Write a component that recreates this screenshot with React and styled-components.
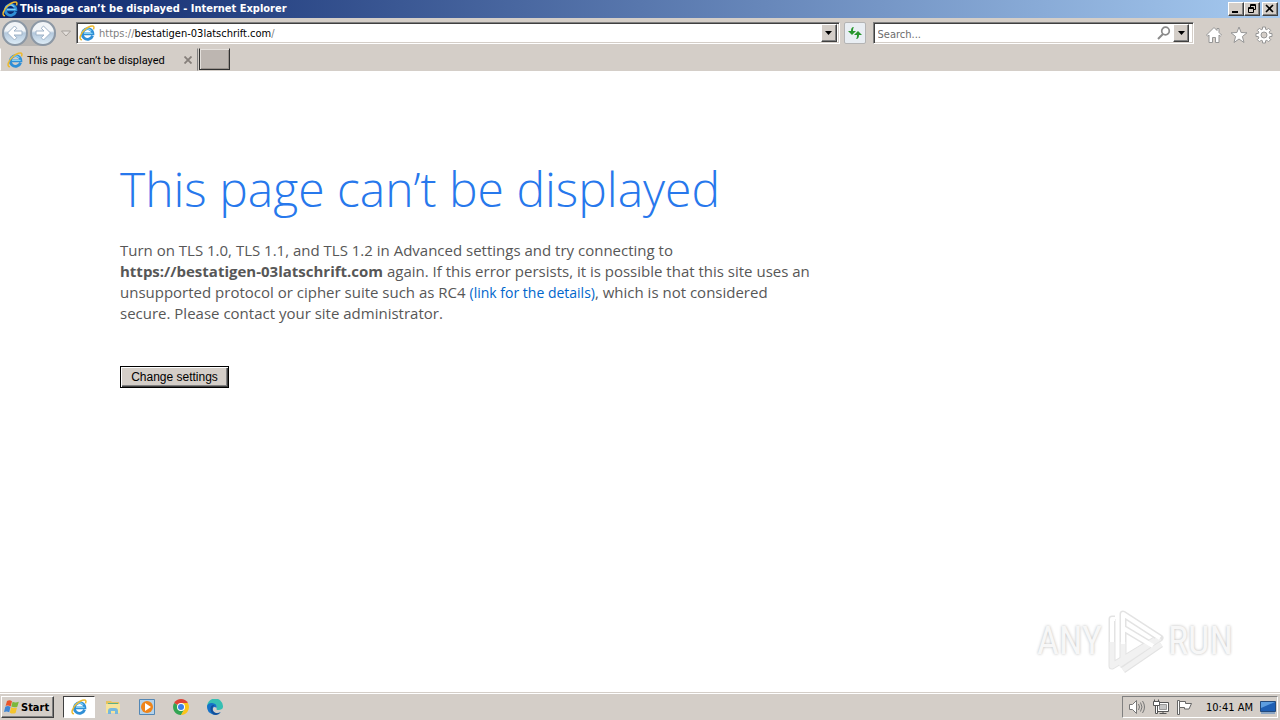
import styled, { createGlobalStyle, css } from 'styled-components';

const GlobalStyle = createGlobalStyle`
  * {
    box-sizing: border-box;
  }

  body {
    margin: 0;
    background: #fff;
    font-family: "DejaVu Sans Condensed", "Noto Sans", sans-serif;
    font-size: 11px;
    color: #000;
  }

  button, input {
    font: inherit;
    color: inherit;
    margin: 0;
    padding: 0;
  }

  svg {
    display: block;
    flex: none;
  }
`

const raised = css`
  border: 1px solid;
  border-color: #fff #404040 #404040 #fff;
  box-shadow: inset -1px -1px 0 #808080;
  background: #d4cec8;
`

const Window = styled.div`
  display: flex;
  flex-direction: column;
  min-height: 100vh;
`

const TitleBar = styled.header`
  display: flex;
  align-items: center;
  gap: 2px;
  height: 18px;
  padding: 0 2px;
  background: linear-gradient(90deg, #0a246a, #a6caf0);
  color: #fff;

  h1 {
    flex: 1;
    margin: 0;
    font-family: "DejaVu Sans Condensed", sans-serif;
    font-size: 11px;
    line-height: 16px;
    font-weight: 700;
  }
`

const WindowButtons = styled.div`
  display: flex;

  button:last-child {
    margin-left: 2px;
  }
`

const WindowButton = styled.button`
  ${raised}
  display: grid;
  place-items: center;
  width: 16px;
  height: 14px;
`

const NavBar = styled.div`
  display: flex;
  align-items: center;
  height: 30px;
  padding: 0 4px 0 2px;
  background: #d4cec8;
`

const HistoryButtons = styled.div`
  display: flex;
  gap: 2px;
  border-radius: 14px;
  background: #b9b6b3;
`

const RoundButton = styled.button`
  display: grid;
  place-items: center;
  width: 26px;
  height: 26px;
  border: 2px solid #8c98a5;
  border-radius: 50%;
  background: linear-gradient(#f1f4f7 40%, #b3c8dc 50%, #dcebf6);
`

const PlainButton = styled.button`
  display: grid;
  place-items: center;
  width: ${({ $width }) => $width || 24}px;
  height: 22px;
  border: 0;
  background: none;
`

const Field = styled.form`
  display: flex;
  align-items: center;
  flex: ${({ $grow }) => $grow} 1 0;
  height: 22px;
  padding: 0 ${({ $end }) => $end || 2}px 0 2px;
  border: 1px solid;
  border-color: #808080 #fff #fff #808080;
  box-shadow: inset 1px 1px 0 #404040, inset -1px -1px 0 #d4cec8;
  background: #fff;
`

const Address = styled.label`
  position: relative;
  display: flex;
  align-items: center;
  flex: 1;
  height: 18px;

  input {
    flex: 1;
    min-width: 0;
    border: 0;
    outline: 0;
    background: none;
    color: transparent;
  }
`

// sits over the input so that the host can be darker than the scheme
const AddressText = styled.span`
  position: absolute;
  left: 20px;
  line-height: 20px;
  top: 0;
  color: #808080;
  pointer-events: none;

  b {
    font-weight: 400;
    color: #000;
  }
`

const SearchInput = styled.input`
  flex: 1;
  min-width: 0;
  border: 0;
  outline: 0;
  background: none;

  &::placeholder {
    color: #6d6d6d;
    opacity: 1;
  }

  && {
    padding: 2px 0 0 2px;
  }
`

const DropButton = styled.button`
  ${raised}
  display: grid;
  place-items: center;
  width: 16px;
  height: 18px;
`

const RefreshButton = styled.button`
  display: grid;
  place-items: center;
  width: 22px;
  height: 22px;
  border: 1px solid #b4b4b4;
  border-radius: 2px;
  background: #e9eef3;

  && {
    margin: 0 7px 0 4px;
  }
`

const Tools = styled.div`
  display: flex;
  margin: 3px 0 0 8px;
  gap: 1px;
`

const TabBar = styled.div`
  display: flex;
  gap: 1px;
  height: 23px;
  background: #d4cec8;
`

const Tab = styled.div`
  display: flex;
  align-items: center;
  gap: 4px;
  width: 198px;
  padding: 1px 0 0 6px;
  border: 1px solid;
  border-color: #d4cec8 #808080 #d4cec8 #fff;
  font-family: Roboto, "Liberation Sans", sans-serif;

  span {
    flex: 1;
  }
`

const NewTab = styled.button`
  width: 31px;
  height: 22px;
  border: 1px solid;
  border-color: #d4cec8 #303030 #303030 #303030;
  background: #bdb6b1;
  box-shadow: inset 1px 1px 0 #e4e0dc, inset -1px -1px 0 #98918c;
`

const Page = styled.main`
  display: flex;
  flex-direction: column;
  flex: 1;
  padding: 84px 120px 0;
  font-family: "Open Sans", "Noto Sans", sans-serif;
  font-size: 15px;
  line-height: 21px;
  color: #575757;

  h2 {
    margin: 0;
    font-size: 48px;
    line-height: 68px;
    font-weight: 300;
    color: #2778ec;
  }

  p {
    max-width: 700px;
    margin: 17px 0 42px;
  }

  b {
    white-space: nowrap;
  }

  a {
    color: #0066cc;
    font-size: 14px;
    text-decoration: none;
  }
`

const SettingsButton = styled.button`
  align-self: flex-start;
  width: 109px;
  height: 22px;
  border: 1px solid #000;
  box-shadow: inset 1px 1px 0 #fff, inset -1px -1px 0 #404040, inset -2px -2px 0 #808080;
  background: #d4cec8;
  color: #000;
  font-family: "Liberation Sans", sans-serif;
  font-size: 12px;
  line-height: 16px;
`

const Watermark = styled.div`
  position: absolute;
  right: 47px;
  bottom: 46px;
  display: flex;
  align-items: center;
  gap: 3px;
  font-family: "Roboto Condensed", "Liberation Sans Narrow", sans-serif;
  font-size: 38px;
  line-height: 64px;
  color: #f7f7f7;
  text-shadow: 0 0 3px #b8b8b8;
`

const TaskBar = styled.footer`
  display: flex;
  align-items: center;
  height: 28px;
  padding: 1px 2px 0 1px;
  border-top: 1px solid #d4cec8;
  box-shadow: inset 0 1px 0 #fff;
  background: #d4cec8;
`

const StartButton = styled.button`
  ${raised}
  display: flex;
  align-items: center;
  gap: 1px;
  width: 53px;
  height: 22px;
  font-weight: 700;

  && {
    padding-left: 2px;
    margin-right: 9px;
  }
`

const TaskButton = styled.button`
  display: grid;
  place-items: center;
  width: 32px;
  height: 22px;
  border: 1px solid;
  border-color: ${({ $active }) => ($active ? '#404040 #fff #fff #404040' : 'transparent')};
  background: ${({ $active }) => ($active ? '#fff' : 'none')};

  && {
    margin-right: 2px;
  }
`

const Tray = styled.div`
  display: flex;
  align-items: center;
  gap: 7px;
  height: 22px;
  margin-left: auto;
  padding: 0 1px 0 5px;
  border: 1px solid;
  border-color: #808080 #fff #fff #808080;

  time {
    margin-left: 6px;
  }
`

const IeIcon = ({ size = 16 }) => (
  <svg width={size} height={size} viewBox="0 0 16 16" fill="none">
    <path d="M13.600 10.800A5.300 5.300 0 1 1 13.900 8.800H4.500" stroke="#2f8fd6" strokeWidth="2.800" />
    <path d="M13.600 8.400H5M3.200 7.700A5.200 5.200 0 0 1 12.300 6" stroke="#7fd0f5" strokeWidth="1.200" />
    <path d="M3 14.800C-.8 14.600 1.500 8.500 6 4.500c3.500-3 8-4.600 8.800-2.700.3.800 0 1.700-.4 2.600" stroke="#edb92e" strokeWidth="1.500" />
  </svg>
)

const ArrowIcon = ({ forward }) => (
  <svg width="18" height="18" viewBox="0 0 18 18">
    <path
      d={forward
        ? 'M9.500 2l7 7-7 7-2.300-2.300L10 11H2V7h8L7.200 4.300z'
        : 'M8.500 2l-7 7 7 7 2.300-2.300L8 11h8V7H8l2.800-2.700z'}
      fill="#fff"
      stroke="#9fb3c8"
    />
  </svg>
)

const DropIcon = () => (
  <svg width="7" height="4" viewBox="0 0 7 4"><path d="M0 0h7L3.500 4z" /></svg>
)

const HistoryIcon = () => (
  <svg width="10" height="7" viewBox="0 0 10 7"><path d="M.5 1h9L5 6z" fill="#e4e0dc" stroke="#a5a09b" /></svg>
)

const RefreshIcon = () => (
  <svg width="16" height="16" viewBox="0 0 16 16" fill="#28962d">
    <path d="M7 2C4.500 2 4 4 4 6H1l4 4 4-4H6c0-2 .2-3 1-4z" />
    <path d="M9 14c2.500 0 3-2 3-4h3l-4-4-4 4h3c0 2-.2 3-1 4z" />
  </svg>
)

const SearchIcon = () => (
  <svg width="14" height="14" viewBox="0 0 14 14" fill="none" stroke="#8a8a8a">
    <circle cx="8.500" cy="5" r="3.800" strokeWidth="1.700" />
    <path d="M6 8l-5 5" strokeWidth="2" />
  </svg>
)

const HomeIcon = () => (
  <svg width="18" height="18" viewBox="0 0 18 18" fill="#fff" stroke="#969696">
    <path d="M9 1.500L1.500 9l1.200 1.200L4 9v7.500h3.500v-5h3v5H14V9l1.300 1.200L16.500 9 14 6.500v-4h-2v2z" />
  </svg>
)

const StarIcon = () => (
  <svg width="18" height="18" viewBox="0 0 18 18" fill="#fff" stroke="#969696">
    <path d="M9 1l2.100 5.500 5.900.3-4.600 3.700L14 16.500 9 13l-5 3.500 1.600-6L1 6.800l5.900-.3z" />
  </svg>
)

const GearIcon = () => (
  <svg width="18" height="18" viewBox="0 0 18 18" fill="#fff" stroke="#969696">
    <path d="M7.500 1h3v2.200l1.400.6 1.600-1.600 2.200 2.200-1.600 1.600.6 1.500H17v3h-2.300l-.6 1.500 1.600 1.600-2.200 2.200-1.600-1.600-1.400.6V17h-3v-2.200l-1.400-.6-1.600 1.600-2.200-2.200L3.900 12l-.6-1.500H1v-3h2.300L3.900 6 2.300 4.400l2.200-2.200 1.600 1.600 1.400-.6z" />
    <circle cx="9" cy="9" r="3" fill="#d4cec8" />
  </svg>
)

const WindowsIcon = () => (
  <svg width="16" height="16" viewBox="0 0 16 16">
    <path d="M3 2c2-1 3.500-.8 5 .2L6.700 7.400C5 6.400 3.500 6.400 1.600 7z" fill="#e9552b" />
    <path d="M8.600 2.700c2 1 3.800 1 6.200 0l-1.500 5c-2 1-4 .8-6-.1z" fill="#7bb83b" />
    <path d="M1.300 7.700c2-.8 3.500-.8 5.200.2L5.200 13.300C3.500 12.300 2 12.200 0 13z" fill="#3f86d5" />
    <path d="M7.100 8.300c2 1 3.900 1 5.900.2L11.600 14c-2 .9-3.800.8-5.800-.3z" fill="#f5c52e" />
  </svg>
)

const FolderIcon = () => (
  <svg width="16" height="16" viewBox="0 0 16 16">
    <path d="M1 2h5l1 1h7v10H1z" fill="#e6c35e" />
    <path d="M3 4h10v3H3z" fill="#5caf86" />
    <path d="M1 5h14v9H1z" fill="#f6e39b" />
    <path d="M3 15v-3a3 3 0 0 1 3-3h4a3 3 0 0 1 3 3v3h-3v-3H6v3z" fill="#76b8dd" />
  </svg>
)

const PlayerIcon = () => (
  <svg width="16" height="16" viewBox="0 0 16 16">
    <path d="M.5.500h15v15H.500z" fill="#b4d2ea" stroke="#5387b5" />
    <circle cx="8" cy="8" r="6" fill="#ef8419" />
    <path d="M6 4l6 4-6 4z" fill="#fff" />
  </svg>
)

const ChromeIcon = () => (
  <svg width="16" height="16" viewBox="0 0 16 16">
    <path d="M8 8L1.100 4A8 8 0 0 1 14.900 4z" fill="#df4335" />
    <path d="M8 8L1.100 4A8 8 0 0 0 8 16l3.500-6z" fill="#33a553" />
    <path d="M8 8l3.500 2L8 16A8 8 0 0 0 14.900 4H8z" fill="#fbc419" />
    <circle cx="8" cy="8" r="4" fill="#fff" />
    <circle cx="8" cy="8" r="3" fill="#3c7fe8" />
  </svg>
)

const EdgeIcon = () => (
  <svg width="16" height="16" viewBox="0 0 16 16">
    <path d="M0 8a8 8 0 0 1 16-1c.3 3-2 4-4.500 4-2 0-2.500-1-1.700-2 .8-1.700-.5-3-2.500-3C4 6 1 8 0 8z" fill="#36bfb3" />
    <path d="M0 8c0-3 3-4.500 6-3.800 3 .5 4.500 3 3.500 4.800C7 6.800 5 9 6 11.500c1 2.800 4.700 3.300 8 1.500A8 8 0 0 1 0 8z" fill="#1572c8" />
    <path d="M3.500 9.500c0-2.500 2-4 4-3.500C5.500 7.500 5 10 6 12c1 2 4 3 7.500 1.500A7 7 0 0 1 9 16c-3.500 0-5.500-3-5.500-6.500z" fill="#134f9a" />
  </svg>
)

const SpeakerIcon = () => (
  <svg width="18" height="16" viewBox="0 0 18 16" fill="none" stroke="#777">
    <path d="M1.500 5.500h3l4-4v13l-4-4h-3z" fill="#fff" />
    <path d="M10.500 5q2 3 0 6M12.500 3.500q3 4.500 0 9M14.500 2q4 6 0 12" />
  </svg>
)

const NetworkIcon = () => (
  <svg width="16" height="16" viewBox="0 0 16 16" fill="#fff" stroke="#555">
    <path d="M4.500 3.500h11v9h-11zM6.500 14.500h7M10 12.500v2" />
    <path d="M6.500 5.500h7v5h-7z" fill="#c4c4c4" stroke="#999" />
    <path d="M.5 2.500h6v4h-6zM1.500.500v2M5.500.500v2M2.500 6.500h2v8h-2z" />
  </svg>
)

const FlagIcon = () => (
  <svg width="17" height="16" viewBox="0 0 17 16" fill="#fff" stroke="#666">
    <path d="M1.500 1.500h2v14h-2z" />
    <path d="M3.500 2.500h6v2h6L13 10H8.500V8.500h-5z" />
  </svg>
)

const DesktopIcon = () => (
  <svg width="16" height="14" viewBox="0 0 16 14">
    <path d="M.5 1.500h15v10H.500z" fill="#1e5fb4" stroke="#234a7c" />
    <path d="M1 2h14L1 8z" fill="#5c9de0" />
    <path d="M1 12h14v2H1z" fill="#8aa5c4" />
  </svg>
)

const PlayLogo = () => (
  <svg width="60" height="66" viewBox="0 0 60 66" fill="none" strokeLinejoin="round">
    <g stroke="#e3e3e3" strokeWidth="7">
      <path d="M10 11H7v47l43-26" />
      <path d="M18 50V6l37 24-41 27M18 20l30 18M18 62l38-26" />
    </g>
    <g stroke="#f1f1f1" strokeWidth="5">
      <path d="M7 34v24l43-26" />
      <path d="M18 34v16M55 30L14 57M18 62l38-26" />
    </g>
    <g stroke="#fff" strokeWidth="4">
      <path d="M10 11H7v23M18 36V6l37 24M18 20l30 18" />
    </g>
  </svg>
)

const tasks = [
  { name: 'Internet Explorer', Icon: IeIcon, active: true },
  { name: 'Windows Explorer', Icon: FolderIcon },
  { name: 'Windows Media Player', Icon: PlayerIcon },
  { name: 'Google Chrome', Icon: ChromeIcon },
  { name: 'Microsoft Edge', Icon: EdgeIcon },
]

export default function App() {
  return (
    <Window>
      <GlobalStyle />
      <TitleBar>
        <IeIcon />
        <h1>This page can’t be displayed - Internet Explorer</h1>
        <WindowButtons>
          <WindowButton aria-label="Minimize">
            <svg width="10" height="10" viewBox="0 0 10 10"><path d="M1 7h6v2H1z" /></svg>
          </WindowButton>
          <WindowButton aria-label="Restore">
            <svg width="10" height="10" viewBox="0 0 10 10" fill="none" stroke="#000">
              <path d="M3.500 3V.500h5v5H7M3 1.500h6M1.500 3.500h5v5h-5zM1 4.500h6" />
            </svg>
          </WindowButton>
          <WindowButton aria-label="Close">
            <svg width="10" height="10" viewBox="0 0 10 10" stroke="#000" strokeWidth="1.600">
              <path d="M1 1l7 7M8 1L1 8" />
            </svg>
          </WindowButton>
        </WindowButtons>
      </TitleBar>

      <NavBar>
        <HistoryButtons>
          <RoundButton aria-label="Back"><ArrowIcon /></RoundButton>
          <RoundButton aria-label="Forward"><ArrowIcon forward /></RoundButton>
        </HistoryButtons>
        <PlainButton $width={20} aria-label="Recent pages"><HistoryIcon /></PlainButton>
        <Field $grow={29} onSubmit={(e) => e.preventDefault()}>
          <Address>
            <IeIcon />
            <input aria-label="Address" defaultValue="" />
            <AddressText>https://<b>bestatigen-03latschrift.com</b>/</AddressText>
          </Address>
          <DropButton type="button" aria-label="Show addresses"><DropIcon /></DropButton>
        </Field>
        <RefreshButton aria-label="Refresh"><RefreshIcon /></RefreshButton>
        <Field $grow={12} $end={4} onSubmit={(e) => e.preventDefault()}>
          <SearchInput aria-label="Search" placeholder="Search..." />
          <PlainButton $width={18} aria-label="Go"><SearchIcon /></PlainButton>
          <DropButton type="button" aria-label="Search providers"><DropIcon /></DropButton>
        </Field>
        <Tools>
          <PlainButton aria-label="Home"><HomeIcon /></PlainButton>
          <PlainButton aria-label="Favorites"><StarIcon /></PlainButton>
          <PlainButton aria-label="Tools"><GearIcon /></PlainButton>
        </Tools>
      </NavBar>

      <TabBar>
        <Tab>
          <IeIcon />
          <span>This page can’t be displayed</span>
          <PlainButton $width={18} aria-label="Close tab">
            <svg width="8" height="8" viewBox="0 0 8 8" stroke="#857f7a" strokeWidth="1.800">
              <path d="M.5.500l7 7M7.500.500l-7 7" />
            </svg>
          </PlainButton>
        </Tab>
        <NewTab aria-label="New tab" />
      </TabBar>

      <Page>
        <h2>This page can’t be displayed</h2>
        <p>
          Turn on TLS 1.0, TLS 1.1, and TLS 1.2 in Advanced settings and try connecting to{' '}
          <b>https://bestatigen-03latschrift.com</b> again. If this error persists, it is possible
          that this site uses an unsupported protocol or cipher suite such as RC4{' '}
          <a href="#details">(link for the details)</a>, which is not considered secure. Please
          contact your site administrator.
        </p>
        <SettingsButton>Change settings</SettingsButton>
      </Page>

      <Watermark>
        <span>ANY</span>
        <PlayLogo />
        <span>RUN</span>
      </Watermark>

      <TaskBar>
        <StartButton><WindowsIcon />Start</StartButton>
        {tasks.map(({ name, Icon, active }) => (
          <TaskButton key={name} aria-label={name} $active={active}><Icon /></TaskButton>
        ))}
        <Tray>
          <SpeakerIcon />
          <NetworkIcon />
          <FlagIcon />
          <time>10:41 AM</time>
          <DesktopIcon />
        </Tray>
      </TaskBar>
    </Window>
  )
}
